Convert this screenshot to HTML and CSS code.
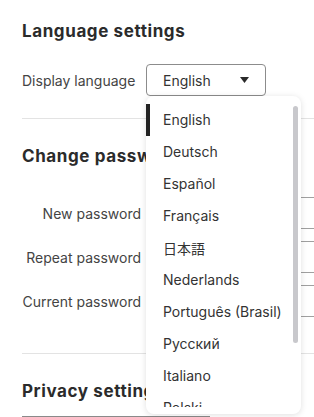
FILE: index.html
```html
<!DOCTYPE html>
<html lang="en">
<head>
<meta charset="utf-8">
<title>Settings</title>
<link rel="stylesheet" href="styles.css">
</head>
<body>
<div class="page">
  <section class="section first">
    <h2 class="heading">Language settings</h2>
    <div class="lang-row">
      <span class="label">Display language</span>
      <div class="select-wrap">
        <div class="select">
          <span>English</span>
          <svg class="caret" width="9" height="6" viewBox="0 0 9 6"><path d="M0 0H9L4.5 6Z" fill="#2a2a2a"/></svg>
        </div>
        <div class="dropdown">
          <div class="viewport">
            <ul class="options">
              <li class="option selected">English</li>
              <li class="option">Deutsch</li>
              <li class="option">Español</li>
              <li class="option">Français</li>
              <li class="option cjk">日本語</li>
              <li class="option">Nederlands</li>
              <li class="option">Português (Brasil)</li>
              <li class="option">Русский</li>
              <li class="option">Italiano</li>
              <li class="option">Polski</li>
            </ul>
          </div>
          <div class="thumb"></div>
        </div>
      </div>
    </div>
  </section>
  <hr class="rule">
  <section class="section">
    <h2 class="heading">Change password</h2>
    <div class="form">
      <label class="f-label">New password</label><div class="input"></div>
      <label class="f-label">Repeat password</label><div class="input"></div>
      <label class="f-label">Current password</label><div class="input"></div>
    </div>
  </section>
  <hr class="rule rule-2">
  <section class="section">
    <h2 class="heading">Privacy settings</h2>
    <div class="bottom-line"></div>
  </section>
</div>
</body>
</html>
```

FILE: styles.css
```css
html, body {
  margin: 0;
  padding: 0;
  overflow: hidden;
  background: #ffffff;
}
body {
  width: 314px;
  height: 417px;
  font-family: Inter, "Noto Sans", sans-serif;
  color: #333;
}
.page {
  width: 420px;
  padding: 0 0 0 22px;
}
.section.first {
  padding-top: 21px;
}
.heading {
  margin: 0;
  font-size: 17px;
  line-height: 20px;
  font-weight: 700;
  color: #2b2b2b;
  letter-spacing: 0.6px;
}
.lang-row {
  display: flex;
  align-items: center;
  gap: 10px;
  margin-top: 23px;
}
.label {
  font-size: 14px;
  color: #444;
  width: 114px;
}
.select-wrap {
  position: relative;
}
.select {
  box-sizing: border-box;
  width: 120px;
  height: 32px;
  border: 1px solid #8c8c8c;
  border-radius: 4px;
  display: flex;
  align-items: center;
  justify-content: space-between;
  padding: 0 16px 0 16px;
  font-size: 14px;
  color: #333;
}
.caret {
  display: block;
}
.rule {
  border: 0;
  border-top: 1px solid #e3e3e3;
  margin: 22px 0 0 0;
  height: 0;
}
.rule + .section .heading {
  margin-top: 27px;
}
.form {
  display: grid;
  grid-template-columns: 119px 1fr;
  column-gap: 11px;
  row-gap: 12px;
  margin-top: 31px;
  align-items: center;
}
.f-label {
  text-align: right;
  font-size: 14px;
  color: #444;
}
.input {
  box-sizing: border-box;
  height: 32px;
  border: 1px solid #a0a0a0;
}
.rule-2 {
  margin-top: 36px;
}
.bottom-line {
  margin-top: 15px;
  width: 188px;
  border-top: 1px solid #8a8a8a;
}
.dropdown {
  position: absolute;
  top: 100%;
  left: 0;
  width: 155px;
  height: 318px;
  background: #fff;
  border-radius: 8px;
  box-shadow: 0 1px 6px rgba(0, 0, 0, 0.13);
  z-index: 5;
}
.viewport {
  height: 311px;
  overflow: hidden;
}
.options {
  list-style: none;
  margin: 0;
  padding: 8px 0 0 0;
}
.option {
  height: 32px;
  line-height: 32px;
  font-size: 14px;
  color: #333;
  white-space: nowrap;
  border-left: 4px solid transparent;
  padding-left: 13px;
}
.option.selected {
  border-left-color: #222;
}
.cjk {
  font-family: "Noto Sans CJK JP", sans-serif;
}
.thumb {
  position: absolute;
  left: 147px;
  top: 10px;
  width: 5px;
  height: 237px;
  border-radius: 3px;
  background: #c8c8cc;
}
```
